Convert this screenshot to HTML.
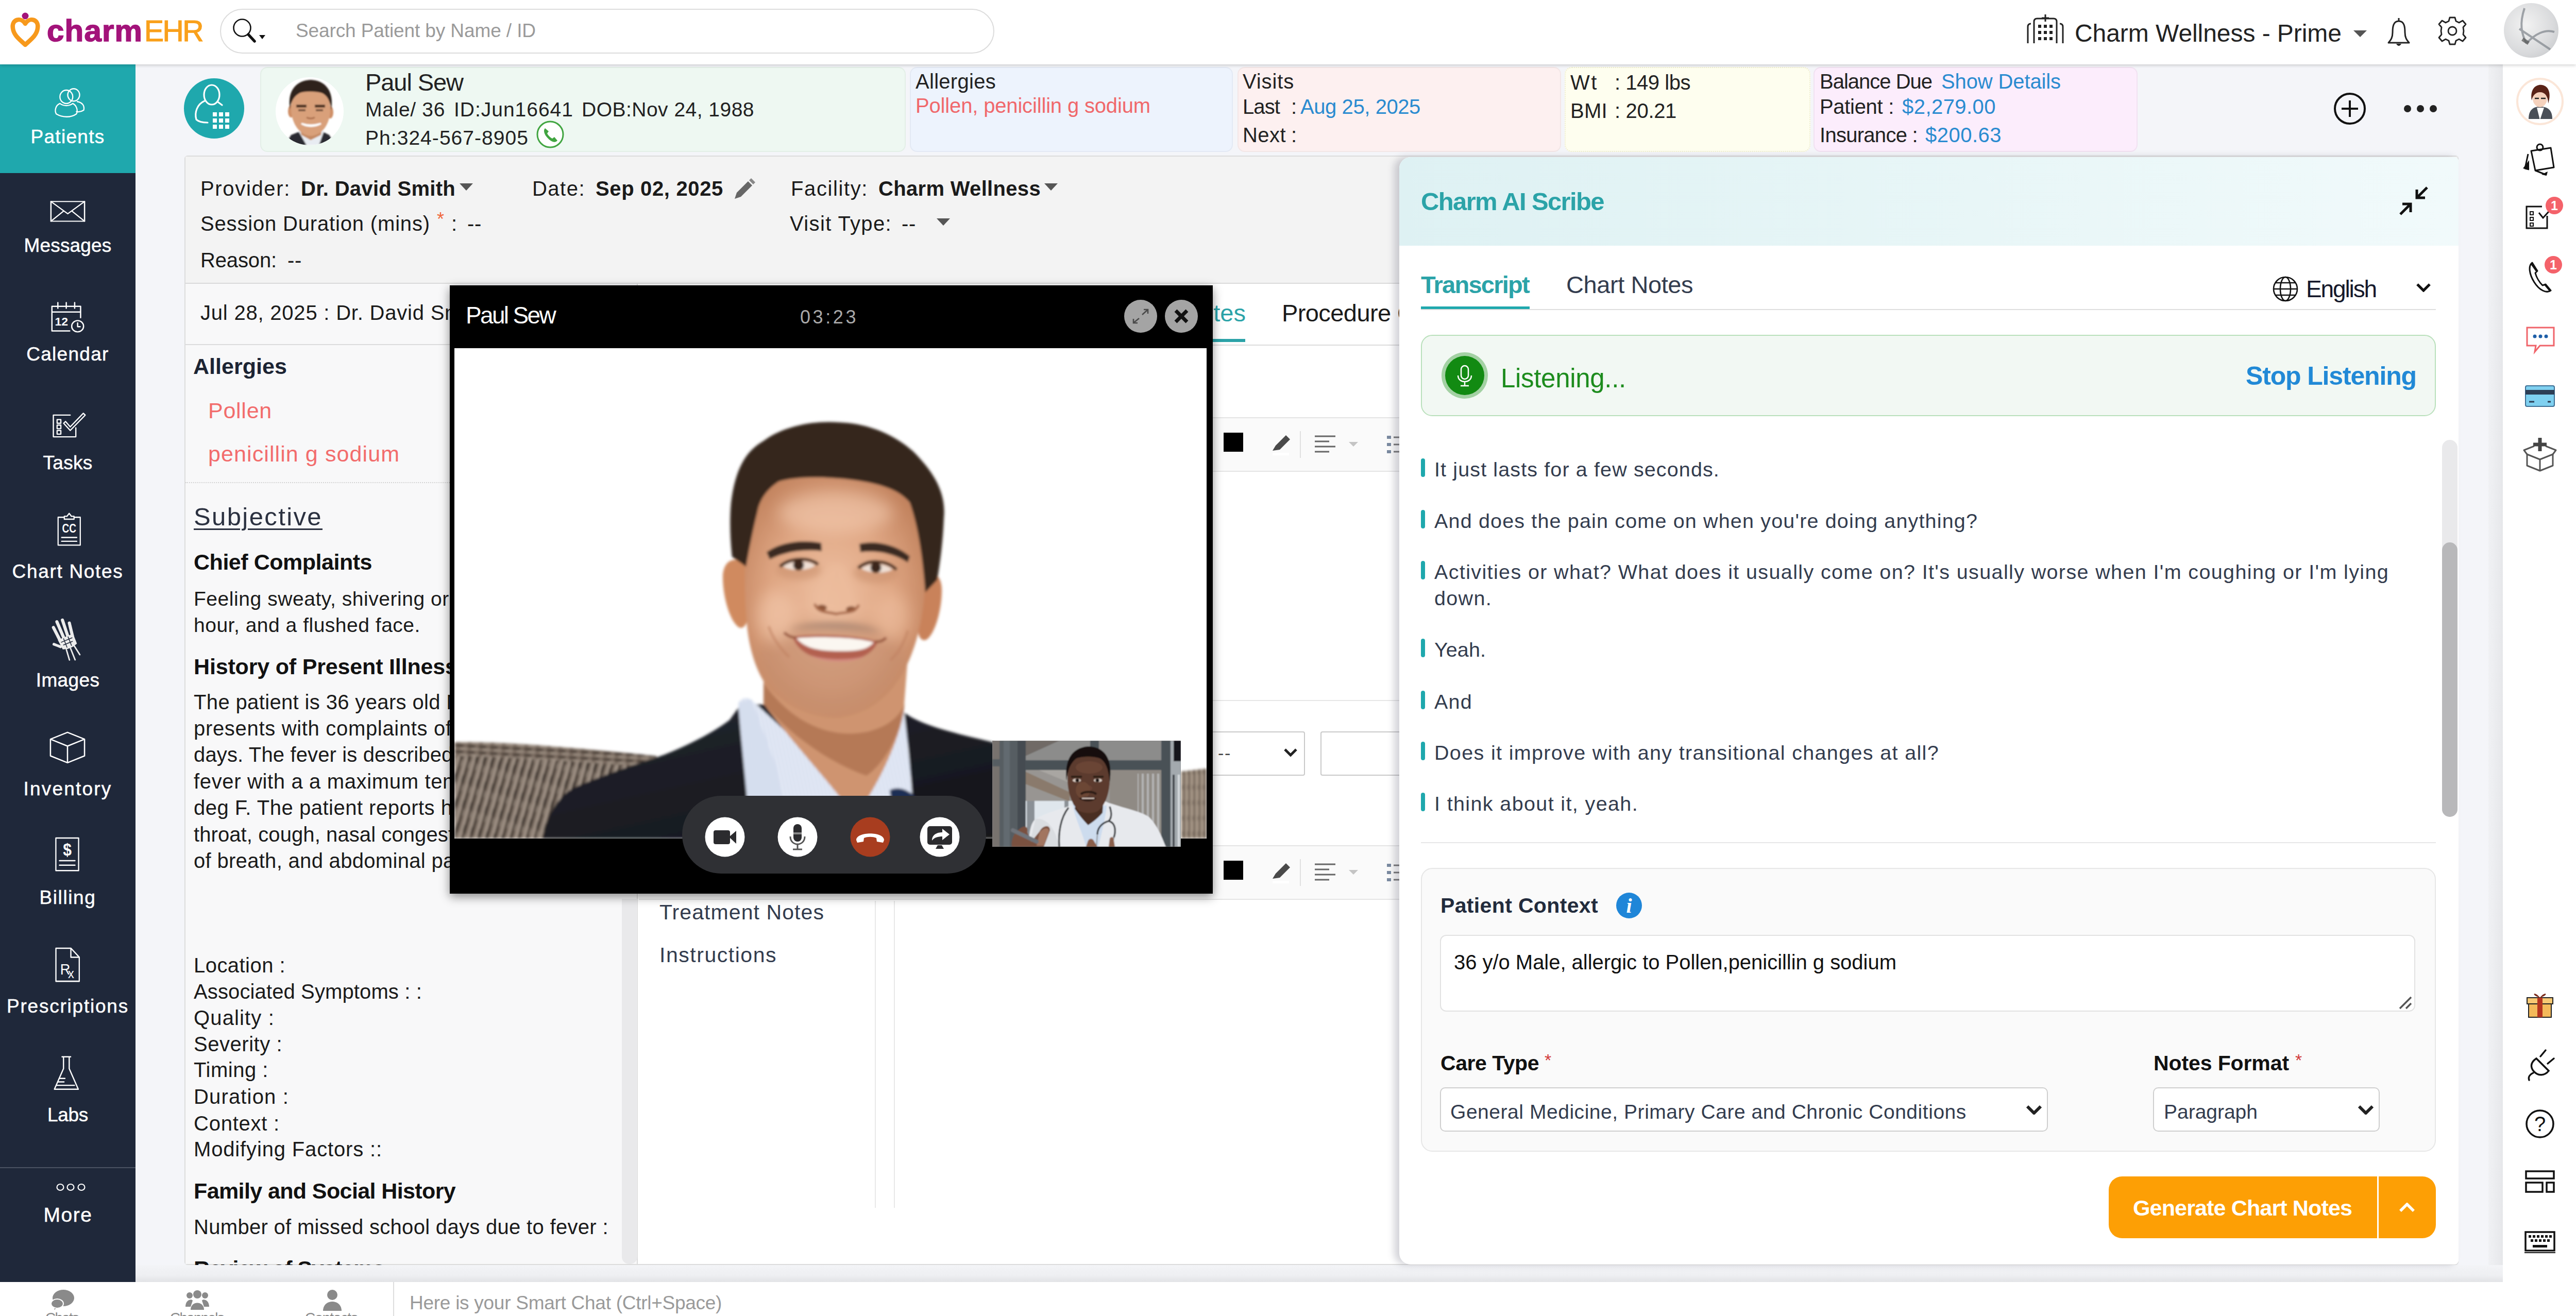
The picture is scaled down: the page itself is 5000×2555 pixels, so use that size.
<!DOCTYPE html>
<html lang="en"><head><meta charset="utf-8"><title>CharmEHR - Charm AI Scribe</title>
<style>
html,body{margin:0;padding:0;}
body{width:5000px;height:2555px;overflow:hidden;position:relative;background:#f4f5f9;font-family:"Liberation Sans",sans-serif;}
.b{position:absolute;box-sizing:border-box;}
.t{position:absolute;white-space:nowrap;}
</style></head>
<body>
<div class="b" style="left:0px;top:0px;width:5000px;height:2555px;background:#f4f5f9;"></div>
<div class="b" style="left:0px;top:0px;width:5000px;height:125px;background:#fff;box-shadow:0 2px 6px rgba(0,0,0,.18);z-index:5;"></div>
<svg class="b" style="left:20px;top:24px;z-index:6;overflow:visible;" width="58" height="70" viewBox="0 0 58 70"><path d="M29 22 C20 8 2 14 5 31 C7 46 20 54 29 63 C38 54 51 46 53 31 C56 14 38 8 29 22 Z" fill="none" stroke="#f7991c" stroke-width="8.5" stroke-linejoin="round"/><circle cx="29" cy="7" r="6.5" fill="#a3137a"/></svg>
<span class="t" style="top:29.8px;font-size:60px;line-height:60px;color:#a3137a;left:91px;font-weight:700;letter-spacing:1.18px;z-index:6;-webkit-text-stroke:1.6px #a3137a;">charm</span>
<span class="t" style="top:31.5px;font-size:57px;line-height:57px;color:#f9a01b;left:280px;letter-spacing:-2.45px;z-index:6;-webkit-text-stroke:1.2px #f9a01b;">EHR</span>
<div class="b" style="left:427px;top:17px;width:1503px;height:87px;background:#fff;border:2px solid #dcdcdc;border-radius:45px;box-sizing:border-box;z-index:6;"></div>
<svg class="b" style="left:448px;top:32px;z-index:6;" width="72" height="56" viewBox="0 0 72 56"><circle cx="22" cy="22" r="16.5" fill="none" stroke="#111" stroke-width="2.6"/><path d="M34 35 L46 48" stroke="#111" stroke-width="5.5" stroke-linecap="round"/><path d="M55 36 L67 36 L61 44 Z" fill="#111"/></svg>
<span class="t" style="top:41.3px;font-size:37px;line-height:37px;color:#9a9a9a;left:574px;letter-spacing:-0.11px;z-index:6;">Search Patient by Name / ID</span>
<svg class="b" style="left:3932px;top:26px;z-index:6;" width="76" height="62" viewBox="0 0 76 62"><g fill="none" stroke="#222" stroke-width="3"><path d="M4 58 V26 Q4 20 10 20"/><path d="M72 58 V26 Q72 20 66 20"/><path d="M16 58 V16 Q16 10 22 10 H54 Q60 10 60 16 V58"/></g><path d="M38 2 V16 M31 9 H45" stroke="#222" stroke-width="3"/><g fill="#222"><rect x="24" y="22" width="6" height="6"/><rect x="35" y="22" width="6" height="6"/><rect x="46" y="22" width="6" height="6"/><rect x="24" y="34" width="6" height="6"/><rect x="35" y="34" width="6" height="6"/><rect x="46" y="34" width="6" height="6"/><rect x="24" y="46" width="6" height="6"/><rect x="35" y="46" width="6" height="6"/><rect x="46" y="46" width="6" height="6"/></g></svg>
<span class="t" style="top:40.8px;font-size:48px;line-height:48px;color:#222;left:4027px;letter-spacing:-0.06px;z-index:6;">Charm Wellness - Prime</span>
<svg class="b" style="left:4568px;top:59px;z-index:6;" width="26" height="13" viewBox="0 0 26 13"><path d="M0 0 H26 L13 13 Z" fill="#555"/></svg>
<svg class="b" style="left:4633px;top:33px;z-index:6;" width="46" height="60" viewBox="0 0 46 60"><path d="M23 2 V8 M23 8 C12 8 11 20 11 30 C11 42 6 46 3 50 H43 C40 46 35 42 35 30 C35 20 34 8 23 8 Z" fill="none" stroke="#222" stroke-width="3" stroke-linejoin="round"/><path d="M18 52 Q23 60 28 52 Z" fill="#222"/></svg>
<svg class="b" style="left:4730px;top:30px;z-index:6;" width="60" height="60" viewBox="0 0 60 60"><g transform="translate(30 30)"><g fill="none" stroke="#222" stroke-width="2.8" stroke-linejoin="round"><path d="M-5 -26 H5 L7 -19 L13 -16 L20 -20 L26 -13 L21 -7 L22 0 L21 7 L26 13 L20 20 L13 16 L7 19 L5 26 H-5 L-7 19 L-13 16 L-20 20 L-26 13 L-21 7 L-22 0 L-21 -7 L-26 -13 L-20 -20 L-13 -16 L-7 -19 Z"/><circle r="8"/></g></g></svg>
<div class="b" style="left:4860px;top:6px;width:106px;height:106px;background:radial-gradient(circle at 40% 40%,#f2f2f2 0,#d9dadc 60%,#bfc1c4 100%);border-radius:50%;z-index:6;overflow:hidden;"><svg width="106" height="106" viewBox="0 0 106 106"><path d="M40 10 C30 40 34 60 44 78 M44 78 C60 60 80 50 98 56 M30 50 L90 90" stroke="#7d838a" stroke-width="4" fill="none" opacity=".7"/><path d="M36 70 L48 78" stroke="#555" stroke-width="7" opacity=".7"/></svg></div>
<!-- s_side -->
<div class="b" style="left:0px;top:125px;width:263px;height:2364px;background:#1f283a;z-index:4;"></div>
<div class="b" style="left:0px;top:125px;width:263px;height:211px;background:#1fa8ad;z-index:4;"></div>
<span class="t" style="top:247.4px;font-size:37px;line-height:37px;color:#fff;left:59.5px;letter-spacing:1.29px;z-index:4;-webkit-text-stroke:.5px #fff;">Patients</span>
<svg class="b" style="left:103px;top:162.6px;z-index:4;overflow:visible" width="64.0" height="68.4" viewBox="-1 -1 72 74" preserveAspectRatio="none"><g fill="none" stroke="#fff" stroke-width="2.6" stroke-linejoin="round" stroke-linecap="round"><circle cx="44" cy="22" r="13"/><path d="M52 36 C64 38 68 46 66 54 C60 58 54 58 50 57"/><circle cx="28" cy="26" r="14"/><path d="M14 40 C4 44 2 56 6 62 C20 70 38 70 50 62 C54 54 50 44 42 40 C34 46 22 46 14 40 Z"/></g></svg>
<span class="t" style="top:458.4px;font-size:37px;line-height:37px;color:#fff;left:46.5px;letter-spacing:0.17px;z-index:4;-webkit-text-stroke:.5px #fff;">Messages</span>
<svg class="b" style="left:96px;top:384px;z-index:4;overflow:visible" width="71.0" height="51.0" viewBox="-1 -1 74 64" preserveAspectRatio="none"><g fill="none" stroke="#fff" stroke-width="2.6" stroke-linejoin="round" stroke-linecap="round"><rect x="2" y="8" width="68" height="48"/><path d="M2 8 L36 38 L70 8 M2 56 L28 31 M70 56 L44 31"/></g></svg>
<span class="t" style="top:669.4px;font-size:37px;line-height:37px;color:#fff;left:51.2px;letter-spacing:1.29px;z-index:4;-webkit-text-stroke:.5px #fff;">Calendar</span>
<svg class="b" style="left:96px;top:581px;z-index:4;overflow:visible" width="71.0" height="68.0" viewBox="-1 -1 74 74" preserveAspectRatio="none"><g fill="none" stroke="#fff" stroke-width="2.6" stroke-linejoin="round" stroke-linecap="round"><path d="M4 14 H62 V38 M4 14 V66 H40 M4 26 H62 M16 6 V18 M33 6 V18 M50 6 V18"/><circle cx="56" cy="56" r="12"/><path d="M56 49 V57 H61"/></g><text x="10" y="54" font-size="24" font-weight="700" fill="#fff" font-family="Liberation Sans,sans-serif">12</text></svg>
<span class="t" style="top:880.4px;font-size:37px;line-height:37px;color:#fff;left:83.5px;letter-spacing:0.28px;z-index:4;-webkit-text-stroke:.5px #fff;">Tasks</span>
<svg class="b" style="left:98.7px;top:798px;z-index:4;overflow:visible" width="69.1" height="54.5" viewBox="-1 -1 76 62" preserveAspectRatio="none"><g fill="none" stroke="#fff" stroke-width="2.6" stroke-linejoin="round" stroke-linecap="round"><path d="M52 36 V56 H4 V8 H40"/><rect x="12" y="18" width="8" height="8"/><rect x="12" y="30" width="8" height="8"/><rect x="12" y="42" width="8" height="8"/><path d="M30 22 L40 34 L68 4 L72 8 L40 42 L26 26 Z"/></g></svg>
<span class="t" style="top:1091.4px;font-size:37px;line-height:37px;color:#fff;left:23.5px;letter-spacing:1.69px;z-index:4;-webkit-text-stroke:.5px #fff;">Chart Notes</span>
<svg class="b" style="left:104.6px;top:994px;z-index:4;overflow:visible" width="53.4" height="69.0" viewBox="-1 -1 62 74" preserveAspectRatio="none"><g fill="none" stroke="#fff" stroke-width="2.6" stroke-linejoin="round" stroke-linecap="round"><path d="M22 10 H8 V68 H58 V10 H44"/><path d="M22 14 V8 H28 L33 2 L38 8 H44 V14 Z"/><path d="M16 52 H50 M16 60 H50"/></g><text x="17" y="42" font-size="26" font-weight="700" fill="#fff" font-family="Liberation Sans,sans-serif" textLength="32" lengthAdjust="spacingAndGlyphs">CC</text></svg>
<span class="t" style="top:1302.4px;font-size:37px;line-height:37px;color:#fff;left:69.8px;letter-spacing:0.36px;z-index:4;-webkit-text-stroke:.5px #fff;">Images</span>
<svg class="b" style="left:102px;top:1202px;z-index:4;overflow:visible" width="53.6" height="76.0" viewBox="-1 -1 66 92" preserveAspectRatio="none"><g transform="translate(32 46) scale(1.15) translate(-32 -46) rotate(-22 32 46)" stroke="#ececec" fill="none" stroke-linecap="round"><g stroke-width="6.5" stroke-dasharray="11 1.6"><path d="M19 44 L16 14"/><path d="M28 42 L27 5"/><path d="M37 42 L39 7"/><path d="M46 46 L50 18"/></g><path d="M15 56 L4 46" stroke-width="5.5" stroke-dasharray="7 1.5"/><path d="M16 42 H48 V62 Q32 68 18 62 Z" fill="#ececec" stroke-width="2"/><g stroke="#1f283a" stroke-width="1.6"><path d="M20 48 H44 M22 55 H42 M27 43 V62 M37 43 V62"/></g><g stroke-width="3"><path d="M24 66 L22 88"/><path d="M33 67 L33 92"/><path d="M42 65 L46 86"/></g></g></svg>
<span class="t" style="top:1513.4px;font-size:37px;line-height:37px;color:#fff;left:45.5px;letter-spacing:2.20px;z-index:4;-webkit-text-stroke:.5px #fff;">Inventory</span>
<svg class="b" style="left:94.8px;top:1418.6px;z-index:4;overflow:visible" width="72.0" height="64.7" viewBox="-1 -1 74 68" preserveAspectRatio="none"><g fill="none" stroke="#fff" stroke-width="2.6" stroke-linejoin="round" stroke-linecap="round"><path d="M36 2 L70 16 V50 L36 64 L2 50 V16 Z M2 16 L36 30 L70 16 M36 30 V64"/></g></svg>
<span class="t" style="top:1724.4px;font-size:37px;line-height:37px;color:#fff;left:76.5px;letter-spacing:1.61px;z-index:4;-webkit-text-stroke:.5px #fff;">Billing</span>
<svg class="b" style="left:103.6px;top:1624px;z-index:4;overflow:visible" width="53.0" height="71.0" viewBox="-1 -1 60 74" preserveAspectRatio="none"><g fill="none" stroke="#fff" stroke-width="2.6" stroke-linejoin="round" stroke-linecap="round"><rect x="4" y="2" width="50" height="66"/><path d="M12 48 H46 M12 57 H46"/></g><text x="29" y="38" text-anchor="middle" font-size="34" font-weight="700" fill="#fff" font-family="Liberation Sans,sans-serif">$</text></svg>
<span class="t" style="top:1935.4px;font-size:37px;line-height:37px;color:#fff;left:13.0px;letter-spacing:1.78px;z-index:4;-webkit-text-stroke:.5px #fff;">Prescriptions</span>
<svg class="b" style="left:103.6px;top:1838px;z-index:4;overflow:visible" width="54.4" height="72.0" viewBox="-1 -1 60 74" preserveAspectRatio="none"><g fill="none" stroke="#fff" stroke-width="2.6" stroke-linejoin="round" stroke-linecap="round"><path d="M4 2 H36 L54 20 V68 H4 Z M36 2 V20 H54"/></g><text x="13" y="54" font-size="30" fill="#fff" font-family="Liberation Sans,sans-serif">R</text><text x="30" y="62" font-size="26" fill="#fff" font-family="Liberation Sans,sans-serif">x</text></svg>
<span class="t" style="top:2146.4px;font-size:37px;line-height:37px;color:#fff;left:92.1px;letter-spacing:-0.36px;z-index:4;-webkit-text-stroke:.5px #fff;">Labs</span>
<svg class="b" style="left:101px;top:2048.8px;z-index:4;overflow:visible" width="55.6" height="70.5" viewBox="-1 -1 60 74" preserveAspectRatio="none"><g fill="none" stroke="#fff" stroke-width="2.6" stroke-linejoin="round" stroke-linecap="round"><path d="M20 2 H38 M23 2 V26 L4 68 H54 L35 26 V2"/><path d="M14 46 H26 M11 53 H24 M8 60 H46"/></g></svg>
<div class="b" style="left:0px;top:2266px;width:263px;height:2px;background:#4a5262;z-index:4;"></div>
<svg class="b" style="left:108px;top:2295px;z-index:4;" width="60" height="20" viewBox="0 0 60 20"><g fill="none" stroke="#fff" stroke-width="2.2"><ellipse cx="9" cy="10" rx="6.5" ry="6"/><ellipse cx="29" cy="10" rx="6.5" ry="6"/><ellipse cx="50" cy="10" rx="6.5" ry="6"/></g></svg>
<span class="t" style="top:2339.2px;font-size:39px;line-height:39px;color:#fff;left:84.5px;letter-spacing:1.54px;z-index:4;-webkit-text-stroke:.5px #fff;">More</span>
<!-- s_header -->
<div class="b" style="left:357px;top:152px;width:117px;height:117px;background:#1fa8ad;border-radius:50%;"></div>
<svg class="b" style="left:357px;top:152px;" width="117" height="117" viewBox="0 0 117 117"><g fill="none" stroke="#fff" stroke-width="3.2" stroke-linecap="round"><ellipse cx="54" cy="32" rx="15" ry="19"/><path d="M40 44 C26 50 20 66 24 80 C28 84 36 86 46 86"/><path d="M66 46 L74 52"/></g><g fill="#fff"><rect x="56" y="66" width="8" height="8"/><rect x="68" y="66" width="8" height="8"/><rect x="80" y="66" width="8" height="8"/><rect x="56" y="78" width="8" height="8"/><rect x="68" y="78" width="8" height="8"/><rect x="80" y="78" width="8" height="8"/><rect x="56" y="90" width="8" height="8"/><rect x="68" y="90" width="8" height="8"/><rect x="80" y="90" width="8" height="8"/></g></svg>
<div class="b" style="left:505px;top:130px;width:1253px;height:165px;background:#eef8f2;border:2px solid #e3efe7;border-radius:14px;"></div>
<div class="b" style="left:1766px;top:130px;width:627px;height:165px;background:#edf3fd;border:2px solid #e3e9f4;border-radius:14px;"></div>
<div class="b" style="left:2402px;top:130px;width:628px;height:165px;background:#fdf0f0;border:2px solid #f3e6e6;border-radius:14px;"></div>
<div class="b" style="left:3037px;top:130px;width:477px;height:165px;background:#fefeef;border:2px dotted #efeecf;border-radius:14px;"></div>
<div class="b" style="left:3520px;top:130px;width:629px;height:165px;background:#fcedfc;border:2px solid #f1e1f1;border-radius:14px;"></div>
<div class="b" style="left:535px;top:150px;width:132px;height:132px;background:#fff;border-radius:50%;overflow:hidden;"><svg width="132" height="132" viewBox="0 0 132 132"><defs><filter id="pb"><feGaussianBlur stdDeviation="1.8"/></filter></defs><g filter="url(#pb)"><path d="M18 132 L30 112 L50 104 L88 104 L104 112 L116 132 Z" fill="#2a2a30"/><path d="M44 104 L60 132 L84 132 L94 104 Z" fill="#e8ecf2"/><path d="M46 96 L90 96 L88 112 L68 122 L50 112 Z" fill="#c58a63"/><ellipse cx="30" cy="66" rx="6" ry="12" fill="#cf8f66"/><ellipse cx="106" cy="68" rx="6" ry="12" fill="#cf8f66"/><path d="M30 60 C30 30 46 22 68 22 C92 22 106 32 106 62 C106 86 94 112 68 114 C44 112 30 86 30 60 Z" fill="#d9a07a"/><path d="M28 62 C22 26 40 6 68 5 C96 6 114 26 108 64 C106 46 100 34 88 30 C74 27 58 27 48 30 C36 36 30 46 28 62 Z" fill="#2e211b"/><path d="M40 56 H60 M76 56 H96" stroke="#3a2418" stroke-width="5"/><path d="M44 64 H58 M78 64 H92" stroke="#4a3023" stroke-width="3"/><path d="M50 90 Q68 100 88 90 Q68 96 50 90 Z" fill="#fff" stroke="#fff" stroke-width="3"/><path d="M60 78 Q68 82 76 78" stroke="#a76a48" stroke-width="3" fill="none"/></g></svg></div>
<span class="t" style="top:136.4px;font-size:47px;line-height:47px;color:#222;left:709px;letter-spacing:-1.07px;">Paul Sew</span>
<span class="t" style="top:193.1px;font-size:39px;line-height:39px;color:#222;left:709px;letter-spacing:0.68px;">Male/ 36</span>
<span class="t" style="top:193.1px;font-size:39px;line-height:39px;color:#222;left:881px;letter-spacing:0.98px;">ID:Jun16641</span>
<span class="t" style="top:193.1px;font-size:39px;line-height:39px;color:#222;left:1129px;letter-spacing:0.48px;">DOB:Nov 24, 1988</span>
<span class="t" style="top:248.1px;font-size:39px;line-height:39px;color:#222;left:709px;letter-spacing:1.04px;">Ph:324-567-8905</span>
<svg class="b" style="left:1040px;top:233px;" width="56" height="56" viewBox="0 0 56 56"><circle cx="28" cy="28" r="25" fill="#fff" stroke="#41a541" stroke-width="3"/><path d="M18 16 C14 20 16 28 24 36 C32 44 38 44 42 40 L36 33 L32 36 C28 34 24 30 22 26 L25 22 Z" fill="#41a541"/></svg>
<span class="t" style="top:138.0px;font-size:40px;line-height:40px;color:#222;left:1777px;letter-spacing:0.29px;">Allergies</span>
<span class="t" style="top:185.0px;font-size:40px;line-height:40px;color:#f0686b;left:1777px;letter-spacing:-0.16px;">Pollen, penicillin g sodium</span>
<span class="t" style="top:138.0px;font-size:40px;line-height:40px;color:#222;left:2412px;letter-spacing:0.86px;">Visits</span>
<span class="t" style="top:187.0px;font-size:40px;line-height:40px;color:#222;left:2412px;letter-spacing:-0.90px;">Last</span>
<span class="t" style="top:187.0px;font-size:40px;line-height:40px;color:#222;left:2506px;">:</span>
<span class="t" style="top:187.0px;font-size:40px;line-height:40px;color:#2a8bd0;left:2524px;letter-spacing:-0.42px;">Aug 25, 2025</span>
<span class="t" style="top:242.0px;font-size:40px;line-height:40px;color:#222;left:2412px;letter-spacing:0.44px;">Next</span>
<span class="t" style="top:242.0px;font-size:40px;line-height:40px;color:#222;left:2506px;">:</span>
<span class="t" style="top:140.0px;font-size:40px;line-height:40px;color:#222;left:3048px;letter-spacing:2.57px;">Wt</span>
<span class="t" style="top:140.0px;font-size:40px;line-height:40px;color:#222;left:3134px;letter-spacing:-0.47px;">: 149 lbs</span>
<span class="t" style="top:195.0px;font-size:40px;line-height:40px;color:#222;left:3048px;letter-spacing:0.29px;">BMI</span>
<span class="t" style="top:195.0px;font-size:40px;line-height:40px;color:#222;left:3134px;letter-spacing:-0.33px;">: 20.21</span>
<span class="t" style="top:138.0px;font-size:40px;line-height:40px;color:#222;left:3532px;letter-spacing:-1.00px;">Balance Due</span>
<span class="t" style="top:138.0px;font-size:40px;line-height:40px;color:#2a8bd0;left:3768px;letter-spacing:-0.12px;">Show Details</span>
<span class="t" style="top:187.0px;font-size:40px;line-height:40px;color:#222;left:3532px;letter-spacing:-0.31px;">Patient :</span>
<span class="t" style="top:187.0px;font-size:40px;line-height:40px;color:#2a8bd0;left:3692px;letter-spacing:0.45px;">$2,279.00</span>
<span class="t" style="top:242.0px;font-size:40px;line-height:40px;color:#222;left:3532px;letter-spacing:-0.72px;">Insurance :</span>
<span class="t" style="top:242.0px;font-size:40px;line-height:40px;color:#2a8bd0;left:3737px;letter-spacing:0.49px;">$200.63</span>
<svg class="b" style="left:4528px;top:178px;" width="66" height="66" viewBox="0 0 66 66"><circle cx="33" cy="33" r="29" fill="none" stroke="#111" stroke-width="4"/><path d="M33 17 V49 M17 33 H49" stroke="#111" stroke-width="4"/></svg>
<svg class="b" style="left:4664px;top:200px;" width="68" height="22" viewBox="0 0 68 22"><circle cx="9" cy="11" r="7" fill="#222"/><circle cx="34" cy="11" r="7" fill="#222"/><circle cx="59" cy="11" r="7" fill="#222"/></svg>
<!-- s_left -->
<div class="b" style="left:358px;top:302px;width:4414px;height:2154px;background:#fff;border:2px solid #dcdcdc;border-radius:6px;"></div>
<div class="b" style="left:360px;top:304px;width:4410px;height:245px;background:#f3f3f3;"></div>
<div class="b" style="left:360px;top:549px;width:4410px;height:2px;background:#dadada;"></div>
<span class="t" style="top:345.5px;font-size:40px;line-height:40px;color:#1a1a1a;left:389px;letter-spacing:1.66px;">Provider:</span>
<span class="t" style="top:345.5px;font-size:40px;line-height:40px;color:#1a1a1a;left:584px;font-weight:700;letter-spacing:0.29px;">Dr. David Smith</span>
<svg class="b" style="left:892px;top:356px;" width="26" height="14" viewBox="0 0 26 14"><path d="M0 0 H26 L13.0 14 Z" fill="#555"/></svg>
<span class="t" style="top:345.5px;font-size:40px;line-height:40px;color:#1a1a1a;left:1033px;letter-spacing:1.48px;">Date:</span>
<span class="t" style="top:345.5px;font-size:40px;line-height:40px;color:#1a1a1a;left:1156px;font-weight:700;letter-spacing:0.65px;">Sep 02, 2025</span>
<svg class="b" style="left:1422px;top:346px;" width="44" height="44" viewBox="0 0 44 44"><path d="M4 40 L8 28 L30 6 L38 14 L16 36 Z" fill="#666"/><path d="M32 4 L36 0 L44 8 L40 12 Z" fill="#888"/></svg>
<span class="t" style="top:345.5px;font-size:40px;line-height:40px;color:#1a1a1a;left:1535px;letter-spacing:1.60px;">Facility:</span>
<span class="t" style="top:345.5px;font-size:40px;line-height:40px;color:#1a1a1a;left:1705px;font-weight:700;letter-spacing:0.32px;">Charm Wellness</span>
<svg class="b" style="left:2027px;top:356px;" width="26" height="14" viewBox="0 0 26 14"><path d="M0 0 H26 L13.0 14 Z" fill="#555"/></svg>
<span class="t" style="top:413.5px;font-size:40px;line-height:40px;color:#1a1a1a;left:389px;letter-spacing:0.83px;">Session Duration (mins)</span>
<span class="t" style="top:407.9px;font-size:36px;line-height:36px;color:#f0683c;left:848px;">*</span>
<span class="t" style="top:413.5px;font-size:40px;line-height:40px;color:#1a1a1a;left:876px;">:</span>
<span class="t" style="top:413.5px;font-size:40px;line-height:40px;color:#1a1a1a;left:907px;letter-spacing:0.68px;">--</span>
<span class="t" style="top:413.5px;font-size:40px;line-height:40px;color:#1a1a1a;left:1533px;letter-spacing:1.36px;">Visit Type:</span>
<span class="t" style="top:413.5px;font-size:40px;line-height:40px;color:#1a1a1a;left:1750px;letter-spacing:0.68px;">--</span>
<svg class="b" style="left:1818px;top:424px;" width="26" height="14" viewBox="0 0 26 14"><path d="M0 0 H26 L13.0 14 Z" fill="#555"/></svg>
<span class="t" style="top:484.5px;font-size:40px;line-height:40px;color:#1a1a1a;left:389px;letter-spacing:-0.14px;">Reason:</span>
<span class="t" style="top:484.5px;font-size:40px;line-height:40px;color:#1a1a1a;left:558px;letter-spacing:0.68px;">--</span>
<div class="b" style="left:360px;top:551px;width:878px;height:1903px;background:#f8f8f9;border-right:2px solid #dcdcdc;overflow:hidden;"></div>
<span class="t" style="top:586.5px;font-size:40px;line-height:40px;color:#1a1a1a;left:389px;letter-spacing:0.79px;">Jul 28, 2025 : Dr. David Smith</span>
<div class="b" style="left:360px;top:668px;width:848px;height:2px;background:#dcdcdc;"></div>
<span class="t" style="top:689.8px;font-size:43px;line-height:43px;color:#1c2433;left:375px;font-weight:700;letter-spacing:0.04px;">Allergies</span>
<span class="t" style="top:775.8px;font-size:43px;line-height:43px;color:#f26c6c;left:404px;letter-spacing:0.74px;">Pollen</span>
<span class="t" style="top:859.8px;font-size:43px;line-height:43px;color:#f26c6c;left:404px;letter-spacing:1.09px;">penicillin g sodium</span>
<div class="b" style="left:360px;top:936px;width:848px;height:0px;border-top:2px dotted #d4d4d4;"></div>
<span class="t" style="top:979.2px;font-size:49px;line-height:49px;color:#2b3140;left:376px;letter-spacing:2.39px;text-decoration:underline;text-decoration-thickness:3px;text-underline-offset:6px;">Subjective</span>
<span class="t" style="top:1069.8px;font-size:43px;line-height:43px;color:#111;left:376px;font-weight:700;letter-spacing:-0.47px;">Chief Complaints</span>
<span class="t" style="top:1143.1px;font-size:39px;line-height:39px;color:#1a1a1a;left:376px;letter-spacing:0.55px;">Feeling sweaty, shivering or chills for the last</span>
<span class="t" style="top:1194.1px;font-size:39px;line-height:39px;color:#1a1a1a;left:376px;letter-spacing:0.51px;">hour, and a flushed face.</span>
<span class="t" style="top:1272.8px;font-size:43px;line-height:43px;color:#111;left:376px;font-weight:700;letter-spacing:-0.17px;">History of Present Illness</span>
<span class="t" style="top:1342.5px;font-size:40px;line-height:40px;color:#1a1a1a;left:376px;letter-spacing:0.36px;">The patient is 36 years old Male who</span>
<span class="t" style="top:1393.9px;font-size:40px;line-height:40px;color:#1a1a1a;left:376px;letter-spacing:0.68px;">presents with complaints of fever for 3</span>
<span class="t" style="top:1445.3px;font-size:40px;line-height:40px;color:#1a1a1a;left:376px;letter-spacing:0.14px;">days. The fever is described as high grade</span>
<span class="t" style="top:1496.7px;font-size:40px;line-height:40px;color:#1a1a1a;left:376px;letter-spacing:0.65px;">fever with a a maximum temperature of 103</span>
<span class="t" style="top:1548.1px;font-size:40px;line-height:40px;color:#1a1a1a;left:376px;letter-spacing:0.50px;">deg F. The patient reports having sore</span>
<span class="t" style="top:1599.5px;font-size:40px;line-height:40px;color:#1a1a1a;left:376px;letter-spacing:0.09px;">throat, cough, nasal congestion, shortness</span>
<span class="t" style="top:1650.9px;font-size:40px;line-height:40px;color:#1a1a1a;left:376px;letter-spacing:0.31px;">of breath, and abdominal pain.</span>
<span class="t" style="top:1853.5px;font-size:40px;line-height:40px;color:#1a1a1a;left:376px;letter-spacing:0.45px;">Location :</span>
<span class="t" style="top:1904.5px;font-size:40px;line-height:40px;color:#1a1a1a;left:376px;letter-spacing:0.12px;">Associated Symptoms : :</span>
<span class="t" style="top:1955.5px;font-size:40px;line-height:40px;color:#1a1a1a;left:376px;letter-spacing:1.14px;">Quality :</span>
<span class="t" style="top:2006.5px;font-size:40px;line-height:40px;color:#1a1a1a;left:376px;letter-spacing:0.53px;">Severity :</span>
<span class="t" style="top:2056.5px;font-size:40px;line-height:40px;color:#1a1a1a;left:376px;letter-spacing:0.53px;">Timing :</span>
<span class="t" style="top:2108.5px;font-size:40px;line-height:40px;color:#1a1a1a;left:376px;letter-spacing:1.16px;">Duration :</span>
<span class="t" style="top:2160.5px;font-size:40px;line-height:40px;color:#1a1a1a;left:376px;letter-spacing:0.77px;">Context :</span>
<span class="t" style="top:2210.5px;font-size:40px;line-height:40px;color:#1a1a1a;left:376px;letter-spacing:0.85px;">Modifying Factors ::</span>
<span class="t" style="top:2290.8px;font-size:43px;line-height:43px;color:#111;left:376px;font-weight:700;letter-spacing:-0.61px;">Family and Social History</span>
<span class="t" style="top:2361.5px;font-size:40px;line-height:40px;color:#1a1a1a;left:376px;letter-spacing:0.31px;">Number of missed school days due to fever :</span>
<span class="t" style="top:2441.9px;font-size:43px;line-height:43px;color:#111;left:376px;font-weight:700;letter-spacing:-1.15px;">Review of Systems</span>
<div class="b" style="left:1207px;top:1745px;width:30px;height:709px;background:#e9e9eb;border-radius:0 0 14px 14px;"></div>
<!-- s_mid -->
<span class="t" style="top:583.5px;font-size:47px;line-height:47px;color:#2ba3a8;left:2167.2px;">Chart Notes</span>
<div class="b" style="left:2200px;top:658px;width:217px;height:6px;background:#2ba3a8;"></div>
<span class="t" style="top:583.5px;font-size:47px;line-height:47px;color:#1a1a1a;left:2488px;letter-spacing:-0.59px;">Procedure Codes</span>
<div class="b" style="left:1240px;top:669px;width:1480px;height:2px;background:#dcdcdc;"></div>
<div class="b" style="left:1240px;top:810px;width:1480px;height:106px;background:#fafafa;border-top:2px solid #e4e4e4;border-bottom:2px solid #e4e4e4;"></div>
<div class="b" style="left:2375px;top:840px;width:38px;height:37px;background:#000;"></div>
<svg class="b" style="left:2468px;top:843px;" width="38" height="42" viewBox="0 0 38 42"><path d="M2 32 L8 22 L28 2 L36 10 L16 30 Z" fill="#4a4a4a"/><rect x="2" y="36" width="32" height="5" fill="#fff"/></svg>
<div class="b" style="left:2523px;top:837px;width:2px;height:52px;background:#e0e0e0;"></div>
<svg class="b" style="left:2552px;top:845px;" width="42" height="38" viewBox="0 0 42 38"><g stroke="#666" stroke-width="3"><path d="M0 2 H40 M0 12 H28 M0 22 H40 M0 32 H28"/></g></svg>
<svg class="b" style="left:2618px;top:858px;" width="18" height="9" viewBox="0 0 18 9"><path d="M0 0 H18 L9 9 Z" fill="#c4c4c4"/></svg>
<svg class="b" style="left:2692px;top:845px;" width="30" height="38" viewBox="0 0 30 38"><g fill="#7a8aa0"><rect x="0" y="1" width="8" height="6"/><rect x="0" y="15" width="8" height="6"/><rect x="0" y="29" width="8" height="6"/></g><g stroke="#777" stroke-width="3"><path d="M13 4 H30 M13 18 H30 M13 32 H30"/></g></svg>
<div class="b" style="left:2354px;top:1359px;width:366px;height:2px;background:#e6e6e6;"></div>
<div class="b" style="left:2200px;top:1420px;width:333px;height:86px;background:#fff;border:2px solid #c9c9c9;border-radius:4px;"></div>
<span class="t" style="top:1445.0px;font-size:34px;line-height:34px;color:#444;left:2364px;letter-spacing:1.68px;">--</span>
<svg class="b" style="left:2492px;top:1452px;" width="26" height="18" viewBox="0 0 26 18"><path d="M2 3 L13 14 L24 3" fill="none" stroke="#222" stroke-width="5"/></svg>
<div class="b" style="left:2563px;top:1420px;width:300px;height:86px;background:#fff;border:2px solid #c9c9c9;border-radius:4px;"></div>
<div class="b" style="left:1240px;top:1641px;width:1480px;height:106px;background:#fafafa;border-top:2px solid #e4e4e4;border-bottom:2px solid #e4e4e4;"></div>
<div class="b" style="left:2375px;top:1671px;width:38px;height:37px;background:#000;"></div>
<svg class="b" style="left:2468px;top:1674px;" width="38" height="42" viewBox="0 0 38 42"><path d="M2 32 L8 22 L28 2 L36 10 L16 30 Z" fill="#4a4a4a"/><rect x="2" y="36" width="32" height="5" fill="#fff"/></svg>
<div class="b" style="left:2523px;top:1668px;width:2px;height:52px;background:#e0e0e0;"></div>
<svg class="b" style="left:2552px;top:1676px;" width="42" height="38" viewBox="0 0 42 38"><g stroke="#666" stroke-width="3"><path d="M0 2 H40 M0 12 H28 M0 22 H40 M0 32 H28"/></g></svg>
<svg class="b" style="left:2618px;top:1689px;" width="18" height="9" viewBox="0 0 18 9"><path d="M0 0 H18 L9 9 Z" fill="#c4c4c4"/></svg>
<svg class="b" style="left:2692px;top:1676px;" width="30" height="38" viewBox="0 0 30 38"><g fill="#7a8aa0"><rect x="0" y="1" width="8" height="6"/><rect x="0" y="15" width="8" height="6"/><rect x="0" y="29" width="8" height="6"/></g><g stroke="#777" stroke-width="3"><path d="M13 4 H30 M13 18 H30 M13 32 H30"/></g></svg>
<span class="t" style="top:1750.9px;font-size:41px;line-height:41px;color:#333c4e;left:1280px;letter-spacing:1.08px;">Treatment Notes</span>
<span class="t" style="top:1833.9px;font-size:41px;line-height:41px;color:#333c4e;left:1280px;letter-spacing:1.53px;">Instructions</span>
<div class="b" style="left:1698px;top:1749px;width:2px;height:596px;background:#e8e8e8;"></div>
<div class="b" style="left:1735px;top:1749px;width:2px;height:596px;background:#e8e8e8;"></div>
<!-- s_video -->
<div class="b" style="left:873px;top:554px;width:1481px;height:1181px;background:#000;z-index:8;box-shadow:0 6px 18px rgba(0,0,0,.45);"></div>
<span class="t" style="top:589.4px;font-size:46px;line-height:46px;color:#fff;left:904px;letter-spacing:-2.67px;z-index:8;">Paul Sew</span>
<span class="t" style="top:597.8px;font-size:36px;line-height:36px;color:#a9a9a9;left:1553px;letter-spacing:4.58px;z-index:8;">03:23</span>
<svg class="b" style="left:2181px;top:581px;z-index:8;" width="66" height="66" viewBox="0 0 66 66"><circle cx="33" cy="33" r="32" fill="#a4a4a4"/><g fill="none" stroke="#4a4a4a" stroke-width="2.6"><path d="M36 30 L46 21 M39 20 H47 V28"/><path d="M30 37 L20 45 M19 38 V46 H27"/></g></svg>
<svg class="b" style="left:2260px;top:581px;z-index:8;" width="66" height="66" viewBox="0 0 66 66"><circle cx="33" cy="33" r="32" fill="#a4a4a4"/><path d="M22 22 L44 44 M44 22 L22 44" stroke="#111" stroke-width="7"/></svg>
<svg class="b" style="left:882px;top:676px;z-index:8;" width="1460" height="952" viewBox="0 0 1460 952"><defs>
<filter id="vb" x="-5%" y="-5%" width="110%" height="110%"><feGaussianBlur stdDeviation="2.5"/></filter>
<filter id="vb2" x="-30%" y="-30%" width="160%" height="160%"><feGaussianBlur stdDeviation="14"/></filter>
<filter id="vb3" x="-30%" y="-30%" width="160%" height="160%"><feGaussianBlur stdDeviation="6"/></filter>
<pattern id="sofa" width="15" height="46" patternUnits="userSpaceOnUse" patternTransform="rotate(16)"><rect width="15" height="46" fill="#6e6056"/><rect x="0" width="3.5" height="46" fill="#b3a598"/><rect x="6" width="3.5" height="46" fill="#362d28"/><rect x="11.5" width="1.5" height="46" fill="#948679"/><rect x="3.5" y="10" width="2.5" height="14" fill="#4a3f38"/><rect x="9.5" y="28" width="2" height="12" fill="#a39588"/></pattern><pattern id="braid" width="22" height="12" patternUnits="userSpaceOnUse" patternTransform="rotate(3)"><rect width="22" height="12" fill="#7a6c61"/><rect width="14" height="4" fill="#3b312c"/><rect x="8" y="6" width="14" height="3" fill="#a5978a"/></pattern>
<pattern id="sofa2" width="10" height="30" patternUnits="userSpaceOnUse"><rect width="10" height="30" fill="#938373"/><rect x="0" width="2.5" height="30" fill="#bcad9d"/><rect x="5" width="2.5" height="30" fill="#5f5146"/><rect x="2.5" y="8" width="2.5" height="9" fill="#6c5d51"/></pattern>
<pattern id="stripe" width="7" height="40" patternUnits="userSpaceOnUse" patternTransform="rotate(-12)"><rect width="7" height="40" fill="#e6ebf6"/><rect width="2" height="40" fill="#c9d4ea"/></pattern>
<radialGradient id="skin" cx="48%" cy="52%" r="62%"><stop offset="0" stop-color="#efc2a4"/><stop offset=".55" stop-color="#dfa683"/><stop offset="1" stop-color="#bd7d58"/></radialGradient>
<clipPath id="fc"><path d="M564 420 C566 350 580 300 600 270 C640 245 700 240 760 244 C830 248 880 280 895 320 C910 370 916 430 912 480 C908 540 890 600 865 640 C840 680 800 712 745 718 C700 720 650 700 610 660 C585 630 572 580 568 540 C564 500 563 460 564 420 Z"/></clipPath>
<linearGradient id="suit" x1="0" y1="0" x2="1" y2="1"><stop offset="0" stop-color="#24262f"/><stop offset="1" stop-color="#101116"/></linearGradient>
</defs>
<rect width="1460" height="952" fill="#fff"/>
<g filter="url(#vb)">
<path d="M0 768 C100 764 280 784 394 794 L300 880 L176 952 L0 952 Z" fill="url(#sofa)"/>
<path d="M0 765 C100 762 280 780 394 792 L360 812 C280 806 120 792 0 792 Z" fill="url(#braid)"/>
<path d="M1410 822 L1460 816 L1460 952 L1410 952 Z" fill="url(#sofa2)"/>
<!-- suit -->
<path d="M172 952 C176 915 200 870 231 854 C280 832 350 808 394 794 C440 778 500 748 534 722 L557 690 L870 705 C900 730 960 745 1041 764 C1140 800 1230 850 1290 905 L1330 952 Z" fill="url(#suit)"/>
<!-- shirt -->
<path d="M551 689 C556 680 566 676 576 682 L660 760 L760 790 L850 740 L872 700 C880 760 890 860 893 952 L575 952 C568 860 556 760 551 689 Z" fill="url(#stripe)"/>
<path d="M551 689 L576 682 L620 800 L660 952 L575 952 Z" fill="#d3dcee" opacity=".8"/>
<path d="M845 858 C860 850 880 856 893 870 L893 910 L850 900 Z" fill="#1f2f55"/>
<!-- neck -->
<path d="M600 600 L880 600 L872 705 C862 770 815 860 778 910 C735 850 655 765 600 690 Z" fill="#cf9470"/>
<path d="M600 650 C650 720 720 760 800 745 C840 736 864 716 874 690 L872 705 C862 760 830 810 800 830 C740 810 660 760 600 690 Z" fill="#a96d4c" opacity=".7"/>
<!-- ears -->
<path d="M566 420 C548 404 524 408 521 440 C520 480 534 530 552 542 C562 546 568 536 570 520 Z" fill="#d08a5f"/>
<path d="M908 440 C924 430 946 436 946 470 C946 510 932 556 916 566 C906 570 900 560 900 546 Z" fill="#c9825a"/>
<!-- face -->
<path d="M564 420 C566 350 580 300 600 270 C640 245 700 240 760 244 C830 248 880 280 895 320 C910 370 916 430 912 480 C908 540 890 600 865 640 C840 680 800 712 745 718 C700 720 650 700 610 660 C585 630 572 580 568 540 C564 500 563 460 564 420 Z" fill="url(#skin)"/>
<!-- stubble / lower face shading -->
<g clip-path="url(#fc)">
<path d="M585 600 C600 560 640 530 740 530 C830 530 870 560 880 610 C860 660 810 712 745 718 C690 720 620 690 585 600 Z" fill="#b98466" opacity=".45" filter="url(#vb2)"/>
<ellipse cx="625" cy="520" rx="36" ry="50" fill="#f3c9ad" opacity=".6" filter="url(#vb2)"/>
<ellipse cx="850" cy="520" rx="34" ry="46" fill="#f0c2a4" opacity=".5" filter="url(#vb2)"/>
<ellipse cx="740" cy="320" rx="110" ry="40" fill="#f4cdb3" opacity=".55" filter="url(#vb2)"/>
</g>
<!-- hair -->
<path d="M537 300 C545 235 565 200 600 180 C640 150 700 140 747 144 C800 146 850 165 890 200 C930 240 955 280 950 330 C948 380 942 420 937 450 L914 474 C910 420 902 350 884 300 C860 268 800 256 734 252 C690 249 650 252 629 259 C604 276 592 296 588 318 C580 350 572 390 566 424 L539 405 C535 370 534 330 537 300 Z" fill="#34261f"/>
<!-- brows -->
<path d="M606 396 C630 378 672 370 712 378 L713 394 C680 390 644 394 612 410 Z" fill="#3a2a20"/>
<path d="M786 380 C818 372 858 382 884 404 L880 416 C852 398 820 392 788 396 Z" fill="#3a2a20"/>
<!-- eyes -->
<ellipse cx="668" cy="430" rx="44" ry="20" fill="#c98f6c" opacity=".55" filter="url(#vb3)"/>
<ellipse cx="818" cy="436" rx="44" ry="20" fill="#c98f6c" opacity=".55" filter="url(#vb3)"/>
<path d="M638 424 C652 412 686 410 700 422 C688 432 654 434 638 424 Z" fill="#efe0d6"/><circle cx="668" cy="421" r="10.5" fill="#3b281d"/>
<path d="M790 428 C804 416 836 416 850 430 C836 438 806 438 790 428 Z" fill="#efe0d6"/><circle cx="818" cy="426" r="10.5" fill="#3b281d"/>
<path d="M632 424 C650 407 688 405 706 420" stroke="#43291d" stroke-width="6" fill="none"/>
<path d="M784 427 C802 410 838 410 858 430" stroke="#43291d" stroke-width="6" fill="none"/>
<!-- nose -->
<path d="M706 500 C712 470 722 450 728 420 L756 420 C762 450 772 474 778 500 C770 516 712 516 706 500 Z" fill="#ecbb9b" opacity=".75" filter="url(#vb3)"/>
<ellipse cx="713" cy="504" rx="10" ry="6" fill="#8d5437"/><ellipse cx="770" cy="507" rx="10" ry="6" fill="#8d5437"/>
<path d="M700 498 C706 514 726 512 741 516 C756 512 776 516 784 500" stroke="#a8694a" stroke-width="5" fill="none" stroke-linecap="round"/>
<!-- moustache stubble -->
<path d="M650 545 C690 528 790 528 830 552 C800 546 690 542 650 545 Z" fill="#8f7566" opacity=".55" filter="url(#vb3)"/>
<!-- mouth -->
<path d="M656 560 C700 554 780 556 822 570 C808 600 780 606 745 606 C710 606 670 598 656 560 Z" fill="#b3604f"/>
<path d="M664 563 C710 559 780 561 814 571 C800 588 776 588 745 588 C714 588 680 584 664 563 Z" fill="#fbf7f1"/>
<path d="M690 596 C720 606 770 606 796 598 C776 612 716 612 690 596 Z" fill="#d48a80"/>
<path d="M640 552 C648 560 656 562 664 562 M838 562 C830 570 824 570 816 570" stroke="#99583f" stroke-width="5" fill="none"/>
<path d="M610 540 C620 570 640 590 650 600 M880 548 C872 576 858 596 846 606" stroke="#c08060" stroke-width="5" fill="none" opacity=".6"/>
</g></svg>
<svg class="b" style="left:1926px;top:1438px;z-index:8;" width="366" height="206" viewBox="0 0 366 206"><defs><filter id="pbl"><feGaussianBlur stdDeviation="1.1"/></filter>
<pattern id="bld" width="10" height="40" patternUnits="userSpaceOnUse"><rect width="10" height="40" fill="#918c86"/><rect width="4" height="40" fill="#b3b3b3"/></pattern></defs>
<rect width="366" height="206" fill="#8a8886"/>
<g filter="url(#pbl)">
<rect x="0" y="0" width="14" height="206" fill="#77726e"/>
<rect x="64" y="0" width="264" height="40" fill="#8c8c8b"/>
<path d="M64 0 H130 L64 30 Z" fill="#6f6a66"/>
<rect x="64" y="57" width="264" height="62" fill="#989592"/>
<path d="M64 60 L150 100 L150 118 L64 84 Z" fill="#8a7a6c"/>
<path d="M90 57 L170 57 L170 90 Z" fill="#a9a6a2"/>
<rect x="57" y="117" width="100" height="89" fill="#dfe6ec"/>
<rect x="67" y="117" width="15" height="89" fill="#8a9096"/><rect x="140" y="117" width="8" height="40" fill="#8a9096"/>
<rect x="228" y="57" width="100" height="149" fill="#8f8a84"/>
<rect x="282" y="64" width="46" height="142" fill="url(#bld)"/>
<rect x="14" y="0" width="35" height="206" fill="#565d62"/><rect x="22" y="0" width="12" height="206" fill="#626a6f"/><rect x="49" y="0" width="16" height="206" fill="#454c51"/>
<rect x="0" y="36" width="14" height="14" fill="#565d62"/>
<rect x="64" y="38" width="302" height="19" fill="#4a5156"/>
<rect x="190" y="0" width="17" height="40" fill="#4a5156"/>
<rect x="328" y="0" width="18" height="206" fill="#4a5156"/>
<rect x="346" y="0" width="20" height="206" fill="#a3a9ae"/>
<rect x="352" y="0" width="14" height="40" fill="#17191c"/>
<rect x="350" y="66" width="4" height="140" fill="#3c4246"/><rect x="360" y="66" width="4" height="140" fill="#d5dadd"/>
<!-- coat -->
<path d="M71 206 C71 180 74 160 84 152 C104 140 130 134 152 126 L176 118 L214 116 L230 122 C260 132 290 138 304 148 C322 166 330 190 337 206 Z" fill="#e7e9ed"/>
<path d="M84 152 C100 150 120 160 130 206 L71 206 Z" fill="#d4d7dc" opacity=".7"/>
<path d="M156 124 C160 150 176 180 182 206 L206 206 C212 180 220 150 222 126 Z" fill="#cddcee"/>
<!-- stethoscope -->
<path d="M148 130 C132 150 128 180 130 206" stroke="#22262a" stroke-width="3.2" fill="none"/>
<path d="M228 128 C232 140 232 150 226 156 C212 160 204 170 204 182 M226 156 C240 160 240 176 236 188" stroke="#22262a" stroke-width="3.2" fill="none"/>
<path d="M204 182 L202 206 M236 188 L234 200" stroke="#8a8f94" stroke-width="2" fill="none"/>
<!-- neck -->
<path d="M166 110 L216 110 L214 140 C204 152 192 160 186 164 C178 156 168 144 160 132 Z" fill="#4a2e23"/>
<!-- head -->
<path d="M146 72 C146 40 160 26 186 26 C212 26 228 42 228 74 C228 100 220 124 206 136 C198 142 178 142 168 136 C154 124 146 100 146 72 Z" fill="#5c3b2d"/>
<ellipse cx="176" cy="96" rx="14" ry="16" fill="#7a503d" opacity=".55"/><ellipse cx="188" cy="52" rx="26" ry="12" fill="#7a503d" opacity=".5"/>
<path d="M144 78 C140 40 152 14 186 11 C222 12 234 40 228 80 C226 56 220 40 208 34 C196 30 176 30 164 34 C152 42 146 58 144 78 Z" fill="#141110"/>
<path d="M153 70 H174 M196 70 H216" stroke="#1a1210" stroke-width="3"/><ellipse cx="164" cy="77" rx="8" ry="3.6" fill="#d8cbc2"/><circle cx="165" cy="77" r="3.6" fill="#120d0b"/><ellipse cx="205" cy="77" rx="8" ry="3.6" fill="#d8cbc2"/><circle cx="204" cy="77" r="3.6" fill="#120d0b"/><ellipse cx="185" cy="92" rx="9" ry="6" fill="#6d4636" opacity=".8"/>
<path d="M172 104 C178 98 196 98 202 104" stroke="#2a1a15" stroke-width="4" fill="none"/>
<path d="M168 112 C180 108 194 108 202 112 C194 120 178 120 168 112 Z" fill="#2e1c18"/><path d="M174 112 H198" stroke="#d9c9c0" stroke-width="2.5"/>
<!-- hands -->
<path d="M38 206 C36 190 44 176 58 168 C66 164 70 170 68 178 L76 196 L92 176 C98 164 112 162 112 174 L100 206 Z" fill="#7a5140"/>
<path d="M92 178 C100 168 110 168 110 176 L100 204 L86 204 Z" fill="#a27560"/>
<path d="M40 174 L86 196" stroke="#70757b" stroke-width="8" stroke-linecap="round"/>
<path d="M182 206 L186 194 C190 188 196 190 198 196 L204 206 Z M226 206 L228 190 C232 184 236 188 236 194 L238 206 Z" fill="#8a5f4b"/>
</g></svg>
<div class="b" style="left:1324px;top:1545px;width:590px;height:151px;background:#2f3034;border-radius:76px;z-index:8;"></div>
<svg class="b" style="left:1368px;top:1586px;z-index:8;" width="78" height="78" viewBox="0 0 78 78"><circle cx="39" cy="39" r="38.5" fill="#fff"/><rect x="17" y="26" width="32" height="27" rx="4" fill="#2b2b2e"/><path d="M47 39 L61 27 V52 Z" fill="#2b2b2e"/></svg>
<svg class="b" style="left:1509px;top:1586px;z-index:8;" width="78" height="78" viewBox="0 0 78 78"><circle cx="39" cy="39" r="38.5" fill="#fff"/><rect x="31" y="14" width="16" height="34" rx="8" fill="#2b2b2e"/><rect x="31" y="30" width="16" height="4" fill="#888"/><path d="M25 38 C25 58 53 58 53 38" fill="none" stroke="#555" stroke-width="3"/><path d="M39 53 V62 M30 63 H48" stroke="#555" stroke-width="3"/></svg>
<svg class="b" style="left:1650px;top:1586px;z-index:8;" width="78" height="78" viewBox="0 0 78 78"><circle cx="39" cy="39" r="38.5" fill="#a83d1f"/><path d="M12 45 C12 28 66 28 66 45 L64 50 L52 48 L51 41 C44 38 34 38 27 41 L26 48 L14 50 Z" fill="#fff"/></svg>
<svg class="b" style="left:1785px;top:1586px;z-index:8;" width="78" height="78" viewBox="0 0 78 78"><circle cx="39" cy="39" r="38.5" fill="#fff"/><rect x="15" y="18" width="48" height="36" rx="5" fill="#2b2b2e"/><path d="M24 46 C24 34 34 30 44 30 V23 L58 34 L44 45 V38 C36 38 28 40 24 46 Z" fill="#fff"/><path d="M31 62 H47 L43 55 H35 Z" fill="#2b2b2e"/></svg>
<!-- s_scribe -->
<div class="b" style="left:2716px;top:305px;width:2056px;height:2150px;background:#fff;border-radius:22px 8px 8px 22px;box-shadow:-10px 0 14px rgba(60,60,80,.22);overflow:hidden;z-index:7;"><div style="position:absolute;left:0;top:0;width:2056px;height:172px;background:linear-gradient(90deg,#def1f3 0%,#e8f6f7 55%,#f1fafb 100%)"></div></div>
<span class="t" style="top:367.2px;font-size:49px;line-height:49px;color:#2ba3a8;left:2758px;font-weight:700;letter-spacing:-1.63px;z-index:7;">Charm AI Scribe</span>
<svg class="b" style="left:4655px;top:360px;z-index:7;" width="60" height="60" viewBox="0 0 60 60"><g stroke="#111" stroke-width="5" fill="none"><path d="M56 4 L36 24 M36 8 V24 H52"/><path d="M4 56 L24 36 M8 36 H24 V52"/></g></svg>
<span class="t" style="top:529.4px;font-size:47px;line-height:47px;color:#2ba3a8;left:2758px;font-weight:700;letter-spacing:-1.72px;z-index:7;">Transcript</span>
<div class="b" style="left:2758px;top:595px;width:211px;height:6px;background:#1fa8ad;z-index:7;"></div>
<span class="t" style="top:529.4px;font-size:47px;line-height:47px;color:#333c4e;left:3040px;letter-spacing:-0.43px;z-index:7;">Chart Notes</span>
<div class="b" style="left:2758px;top:600px;width:1970px;height:2px;background:#dedede;z-index:7;"></div>
<svg class="b" style="left:4410px;top:535px;z-index:7;" width="52" height="52" viewBox="0 0 52 52"><g fill="none" stroke="#111" stroke-width="2.6"><circle cx="26" cy="26" r="23"/><ellipse cx="26" cy="26" rx="10" ry="23"/><path d="M3 26 H49 M7 14 H45 M7 38 H45"/></g></svg>
<span class="t" style="top:538.0px;font-size:46px;line-height:46px;color:#15192b;left:4476px;letter-spacing:-2.13px;z-index:7;">English</span>
<svg class="b" style="left:4690px;top:549px;z-index:7;" width="28" height="18" viewBox="0 0 28 18"><path d="M2 3 L14.0 15 L26 3" fill="none" stroke="#111" stroke-width="5.2"/></svg>
<div class="b" style="left:2758px;top:650px;width:1970px;height:158px;background:#f2f8f3;border:2px solid #b9e0bb;border-radius:22px;z-index:7;"></div>
<svg class="b" style="left:2797px;top:683px;z-index:7;" width="92" height="92" viewBox="0 0 92 92"><circle cx="46" cy="46" r="45" fill="#a3d1a3"/><circle cx="46" cy="46" r="38" fill="#128a12"/><g fill="none" stroke="#fff" stroke-width="2.5"><rect x="39" y="27" width="14" height="26" rx="7"/><path d="M33 46 C33 62 59 62 59 46 M46 58 V66 M38 66 H54"/></g></svg>
<span class="t" style="top:708.6px;font-size:51px;line-height:51px;color:#1d8c1d;left:2913px;letter-spacing:-0.31px;z-index:7;">Listening...</span>
<span class="t" style="top:704.6px;font-size:50px;line-height:50px;color:#2189d6;left:4359px;font-weight:700;letter-spacing:-1.16px;z-index:7;">Stop Listening</span>
<div class="b" style="left:2758px;top:890px;width:8px;height:36px;background:#1fa8ad;border-radius:4px;z-index:7;"></div>
<span class="t" style="top:892.2px;font-size:39.5px;line-height:39.5px;color:#333c4e;left:2784px;letter-spacing:1.12px;z-index:7;">It just lasts for a few seconds.</span>
<div class="b" style="left:2758px;top:990px;width:8px;height:36px;background:#1fa8ad;border-radius:4px;z-index:7;"></div>
<span class="t" style="top:992.2px;font-size:39.5px;line-height:39.5px;color:#333c4e;left:2784px;letter-spacing:1.16px;z-index:7;">And does the pain come on when you&#x27;re doing anything?</span>
<div class="b" style="left:2758px;top:1089px;width:8px;height:36px;background:#1fa8ad;border-radius:4px;z-index:7;"></div>
<span class="t" style="top:1091.2px;font-size:39.5px;line-height:39.5px;color:#333c4e;left:2784px;letter-spacing:1.37px;z-index:7;">Activities or what? What does it usually come on? It&#x27;s usually worse when I&#x27;m coughing or I&#x27;m lying</span>
<div class="b" style="left:2758px;top:1240px;width:8px;height:36px;background:#1fa8ad;border-radius:4px;z-index:7;"></div>
<span class="t" style="top:1242.2px;font-size:39.5px;line-height:39.5px;color:#333c4e;left:2784px;letter-spacing:0.08px;z-index:7;">Yeah.</span>
<div class="b" style="left:2758px;top:1341px;width:8px;height:36px;background:#1fa8ad;border-radius:4px;z-index:7;"></div>
<span class="t" style="top:1343.2px;font-size:39.5px;line-height:39.5px;color:#333c4e;left:2784px;letter-spacing:1.24px;z-index:7;">And</span>
<div class="b" style="left:2758px;top:1440px;width:8px;height:36px;background:#1fa8ad;border-radius:4px;z-index:7;"></div>
<span class="t" style="top:1442.2px;font-size:39.5px;line-height:39.5px;color:#333c4e;left:2784px;letter-spacing:1.34px;z-index:7;">Does it improve with any transitional changes at all?</span>
<div class="b" style="left:2758px;top:1539px;width:8px;height:36px;background:#1fa8ad;border-radius:4px;z-index:7;"></div>
<span class="t" style="top:1541.2px;font-size:39.5px;line-height:39.5px;color:#333c4e;left:2784px;letter-spacing:1.37px;z-index:7;">I think about it, yeah.</span>
<span class="t" style="top:1142.1px;font-size:39.5px;line-height:39.5px;color:#333c4e;left:2784px;letter-spacing:1.32px;z-index:7;">down.</span>
<div class="b" style="left:4740px;top:854px;width:30px;height:732px;background:#e9e9eb;border-radius:15px;z-index:7;"></div>
<div class="b" style="left:4740px;top:1053px;width:30px;height:533px;background:#b8b8ba;border-radius:15px;z-index:7;"></div>
<div class="b" style="left:2758px;top:1635px;width:1970px;height:2px;background:#e6e6e8;z-index:7;"></div>
<div class="b" style="left:2758px;top:1685px;width:1970px;height:551px;background:#fafafa;border:2px solid #e6e6e6;border-radius:22px;z-index:7;"></div>
<span class="t" style="top:1737.9px;font-size:41px;line-height:41px;color:#222b3c;left:2796px;font-weight:700;letter-spacing:0.35px;z-index:7;">Patient Context</span>
<svg class="b" style="left:3136px;top:1732px;z-index:7;" width="52" height="52" viewBox="0 0 52 52"><circle cx="26" cy="26" r="25" fill="#1f86d8"/><text x="26" y="40" text-anchor="middle" font-family="Liberation Serif,serif" font-style="italic" font-weight="700" font-size="40" fill="#fff">i</text></svg>
<div class="b" style="left:2795px;top:1815px;width:1893px;height:149px;background:#fff;border:2px solid #e2e2e2;border-radius:12px;z-index:7;"></div>
<span class="t" style="top:1848.0px;font-size:40px;line-height:40px;color:#111;left:2822px;letter-spacing:-0.03px;z-index:7;">36 y/o Male, allergic to Pollen,penicillin g sodium</span>
<svg class="b" style="left:4656px;top:1934px;z-index:7;" width="28" height="26" viewBox="0 0 28 26"><path d="M2 24 L24 2 M14 24 L24 14" stroke="#555" stroke-width="3.5"/></svg>
<span class="t" style="top:2044.4px;font-size:41px;line-height:41px;color:#111;left:2796px;font-weight:700;letter-spacing:-0.47px;z-index:7;">Care Type</span>
<span class="t" style="top:2041.0px;font-size:34px;line-height:34px;color:#d23b3b;left:2998px;z-index:7;">*</span>
<div class="b" style="left:2795px;top:2111px;width:1180px;height:86px;background:#fff;border:2px solid #cfcfcf;border-radius:10px;z-index:7;"></div>
<span class="t" style="top:2138.6px;font-size:39px;line-height:39px;color:#333c4e;left:2815px;letter-spacing:0.54px;z-index:7;">General Medicine, Primary Care and Chronic Conditions</span>
<svg class="b" style="left:3933px;top:2145px;z-index:7;" width="30" height="19" viewBox="0 0 30 19"><path d="M2 3 L15.0 16 L28 3" fill="none" stroke="#222" stroke-width="6"/></svg>
<span class="t" style="top:2044.4px;font-size:41px;line-height:41px;color:#111;left:4180px;font-weight:700;letter-spacing:-0.11px;z-index:7;">Notes Format</span>
<span class="t" style="top:2041.0px;font-size:34px;line-height:34px;color:#d23b3b;left:4455px;z-index:7;">*</span>
<div class="b" style="left:4179px;top:2111px;width:440px;height:86px;background:#fff;border:2px solid #cfcfcf;border-radius:10px;z-index:7;"></div>
<span class="t" style="top:2138.6px;font-size:39px;line-height:39px;color:#333c4e;left:4200px;letter-spacing:-0.02px;z-index:7;">Paragraph</span>
<svg class="b" style="left:4577px;top:2145px;z-index:7;" width="30" height="19" viewBox="0 0 30 19"><path d="M2 3 L15.0 16 L28 3" fill="none" stroke="#222" stroke-width="6"/></svg>
<div class="b" style="left:4093px;top:2284px;width:635px;height:120px;background:#fd9f05;border-radius:26px;z-index:7;"></div>
<div class="b" style="left:4614px;top:2284px;width:3px;height:120px;background:#fff;z-index:7;"></div>
<span class="t" style="top:2323.8px;font-size:43px;line-height:43px;color:#fff;left:4140px;font-weight:700;letter-spacing:-0.85px;z-index:7;">Generate Chart Notes</span>
<svg class="b" style="left:4657px;top:2335px;z-index:7;" width="30" height="19" viewBox="0 0 30 19"><path d="M2 16 L15.0 3 L28 16" fill="none" stroke="#fff" stroke-width="5.5"/></svg>
<!-- s_rail -->
<div class="b" style="left:4830px;top:125px;width:28px;height:2364px;background:linear-gradient(90deg,#f0f1f4,#e6e7ea);"></div>
<div class="b" style="left:4858px;top:125px;width:142px;height:2364px;background:#fff;z-index:4;"></div>
<svg class="b" style="left:4884.0px;top:151.0px;z-index:4;overflow:visible;" width="92" height="92" viewBox="0 0 92 92"><circle cx="46" cy="46" r="44" fill="#fff" stroke="#fbe6d8" stroke-width="4"/><path d="M24 80 C24 60 36 56 46 56 C58 56 70 60 70 80 Z" fill="#4a4f57"/><path d="M40 58 L46 82 L54 58 Z" fill="#fff"/><ellipse cx="46" cy="40" rx="14" ry="17" fill="#f6d2bd"/><path d="M30 44 C26 20 40 12 50 14 C64 16 68 32 62 50 C62 36 56 28 46 28 C38 28 32 34 30 44 Z" fill="#5a2318"/><path d="M36 40 H44 M48 40 H57" stroke="#222" stroke-width="2.5"/></svg>
<svg class="b" style="left:4897.0px;top:277.0px;z-index:4;overflow:visible;" width="66" height="66" viewBox="0 0 66 66"><g fill="none" stroke="#111" stroke-width="3" stroke-linejoin="round"><path d="M16 16 L54 10 L60 48 L24 54 Z"/><path d="M10 22 L4 50 L12 52"/><path d="M24 54 L44 62 L46 58"/><circle cx="33" cy="9" r="6"/></g><path d="M0 50 L12 34 V52 Z M36 62 L48 56 L46 64 Z" fill="#111"/></svg>
<svg class="b" style="left:4900.0px;top:393.0px;z-index:4;overflow:visible;" width="60" height="54" viewBox="0 0 60 54"><g fill="none" stroke="#111" stroke-width="3"><path d="M44 26 V50 H4 V8 H34"/><path d="M28 20 L36 30 L56 8"/></g><g fill="none" stroke="#111" stroke-width="2"><rect x="11" y="18" width="6" height="6"/><rect x="11" y="29" width="6" height="6"/><rect x="11" y="40" width="6" height="6"/></g></svg>
<svg class="b" style="left:4940px;top:381px;z-index:4;" width="36" height="36" viewBox="0 0 36 36"><circle cx="18" cy="18" r="17" fill="#f4626a"/><text x="18" y="27" text-anchor="middle" font-size="25" font-weight="700" fill="#fff" font-family="Liberation Sans,sans-serif">1</text></svg>
<svg class="b" style="left:4905.0px;top:506.0px;z-index:4;overflow:visible;" width="50" height="64" viewBox="0 0 50 64"><g fill="none" stroke="#111" stroke-width="3" stroke-linejoin="round"><path d="M10 4 C2 10 4 26 14 42 C24 58 38 64 46 58 L36 46 L30 48 C24 42 18 32 16 24 L20 20 Z"/><path d="M8 6 L18 20 M34 46 L44 58"/></g></svg>
<svg class="b" style="left:4938px;top:496px;z-index:4;" width="36" height="36" viewBox="0 0 36 36"><circle cx="18" cy="18" r="17" fill="#f4626a"/><text x="18" y="27" text-anchor="middle" font-size="25" font-weight="700" fill="#fff" font-family="Liberation Sans,sans-serif">1</text></svg>
<svg class="b" style="left:4902.0px;top:633.0px;z-index:4;overflow:visible;" width="56" height="54" viewBox="0 0 56 54"><path d="M3 3 H55 V38 H28 L18 50 L20 38 H3 Z" fill="#fff" stroke="#f0646a" stroke-width="3"/><circle cx="18" cy="20" r="3.5" fill="#1e5fa8"/><circle cx="29" cy="20" r="3.5" fill="#1e5fa8"/><circle cx="40" cy="20" r="3.5" fill="#1e5fa8"/></svg>
<svg class="b" style="left:4901.0px;top:748.0px;z-index:4;overflow:visible;" width="58" height="42" viewBox="0 0 58 42"><rect x="1" y="1" width="56" height="40" rx="3" fill="#7fd0f0" stroke="#3d6f95" stroke-width="2"/><rect x="1" y="9" width="56" height="9" fill="#2d3e55"/><path d="M8 32 H18 M44 32 H50" stroke="#2d3e55" stroke-width="3"/></svg>
<svg class="b" style="left:4897.0px;top:850.0px;z-index:4;overflow:visible;" width="66" height="66" viewBox="0 0 66 66"><g fill="none" stroke="#555" stroke-width="3" stroke-linejoin="round"><path d="M8 32 L33 42 L58 32 V54 L33 64 L8 54 Z M33 42 V64"/><path d="M8 32 L2 24 L22 16 M58 32 L64 24 L44 16"/></g><path d="M33 0 V26 M20 13 H46" stroke="#444" stroke-width="7"/></svg>
<svg class="b" style="left:4904.0px;top:1925.0px;z-index:4;overflow:visible;" width="52" height="52" viewBox="0 0 52 52"><rect x="4" y="20" width="44" height="30" fill="#f4b95a" stroke="#222" stroke-width="2"/><rect x="1" y="12" width="50" height="12" fill="#f7c873" stroke="#222" stroke-width="2"/><rect x="21" y="12" width="10" height="38" fill="#b5341f"/><path d="M26 12 C16 -2 6 6 26 12 C46 6 36 -2 26 12 Z" fill="#7a2a1a"/></svg>
<svg class="b" style="left:4901.0px;top:2035.0px;z-index:4;overflow:visible;" width="58" height="62" viewBox="0 0 58 62"><g fill="none" stroke="#111" stroke-width="3.5" stroke-linecap="round"><path d="M22 20 L46 44 C38 54 26 54 18 46 C10 38 10 28 22 20 Z"/><path d="M30 16 L40 4 M44 30 L56 20"/><path d="M16 48 C8 52 6 56 8 62"/></g></svg>
<svg class="b" style="left:4902.0px;top:2154.0px;z-index:4;overflow:visible;" width="56" height="56" viewBox="0 0 56 56"><circle cx="28" cy="28" r="26" fill="none" stroke="#111" stroke-width="3.5"/><text x="28" y="42" text-anchor="middle" font-size="40" fill="#111" font-family="Liberation Sans,sans-serif">?</text></svg>
<svg class="b" style="left:4901.0px;top:2272.0px;z-index:4;overflow:visible;" width="58" height="44" viewBox="0 0 58 44"><g fill="none" stroke="#111" stroke-width="3.5"><rect x="2" y="2" width="54" height="14"/><rect x="2" y="24" width="32" height="18"/><rect x="42" y="24" width="14" height="18"/></g></svg>
<svg class="b" style="left:4900.0px;top:2390.0px;z-index:4;overflow:visible;" width="60" height="42" viewBox="0 0 60 42"><rect x="2" y="2" width="56" height="36" fill="none" stroke="#111" stroke-width="3.5"/><g fill="#111"><rect x="8" y="8" width="5" height="5"/><rect x="16" y="8" width="5" height="5"/><rect x="24" y="8" width="5" height="5"/><rect x="32" y="8" width="5" height="5"/><rect x="40" y="8" width="5" height="5"/><rect x="48" y="8" width="5" height="5"/><rect x="12" y="16" width="5" height="5"/><rect x="20" y="16" width="5" height="5"/><rect x="28" y="16" width="5" height="5"/><rect x="36" y="16" width="5" height="5"/><rect x="44" y="16" width="5" height="5"/><rect x="16" y="27" width="28" height="5"/></g><path d="M0 42 H60" stroke="#111" stroke-width="2"/></svg>
<!-- s_bottom -->
<div class="b" style="left:263px;top:2456px;width:4595px;height:33px;background:linear-gradient(180deg,#f3f4f7 0%,#eeeff2 60%,#e2e3e6 100%);"></div>
<div class="b" style="left:0px;top:2489px;width:5000px;height:66px;background:#fff;z-index:9;"></div>
<div class="b" style="left:763px;top:2489px;width:2px;height:66px;background:#dedede;z-index:9;"></div>
<svg class="b" style="left:97px;top:2503px;z-index:9;" width="48" height="44" viewBox="0 0 48 44"><ellipse cx="26" cy="17" rx="21" ry="16" fill="#8a8a8a"/><path d="M12 26 L8 40 L24 30 Z" fill="#8a8a8a"/><ellipse cx="14" cy="28" rx="12" ry="9" fill="#8a8a8a" stroke="#fff" stroke-width="2"/></svg>
<svg class="b" style="left:360px;top:2503px;z-index:9;" width="46" height="44" viewBox="0 0 46 44"><g fill="#8a8a8a"><circle cx="23" cy="10" r="8"/><circle cx="8" cy="12" r="6"/><circle cx="38" cy="12" r="6"/><path d="M10 40 C10 22 36 22 36 40 Z"/><path d="M0 34 C0 20 12 18 14 22 L10 34 Z M46 34 C46 20 34 18 32 22 L36 34 Z"/></g></svg>
<svg class="b" style="left:625px;top:2503px;z-index:9;" width="40" height="44" viewBox="0 0 40 44"><g fill="#8a8a8a"><circle cx="20" cy="11" r="10"/><path d="M2 42 C2 18 38 18 38 42 Z"/></g></svg>
<span class="t" style="top:2544.6px;font-size:28px;line-height:28px;color:#8a8a8a;left:88.0px;letter-spacing:-1.83px;z-index:9;">Chats</span>
<span class="t" style="top:2544.6px;font-size:28px;line-height:28px;color:#8a8a8a;left:330.0px;letter-spacing:-1.79px;z-index:9;">Channels</span>
<span class="t" style="top:2544.6px;font-size:28px;line-height:28px;color:#8a8a8a;left:592.0px;letter-spacing:-1.06px;z-index:9;">Contacts</span>
<span class="t" style="top:2511.3px;font-size:37px;line-height:37px;color:#9a9a9a;left:795px;letter-spacing:-0.27px;z-index:9;">Here is your Smart Chat (Ctrl+Space)</span>
<script>(function(){var w=window.innerWidth;if(w&&Math.abs(w-5000)>2){document.body.style.transformOrigin="0 0";document.body.style.transform="scale("+(w/5000)+")";}})();</script>
</body></html>
